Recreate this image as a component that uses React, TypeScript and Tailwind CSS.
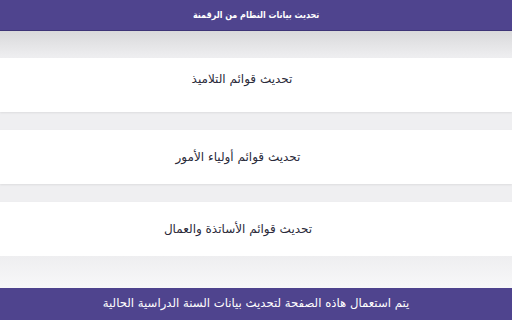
import React from "react";

const cards = [
  { t: "تحديث قوائم التلاميذ", c: "pb-[12px] pr-[28px]" },
  { t: "تحديث قوائم أولياء الأمور", c: "pr-[36px]" },
  { t: "تحديث قوائم الأساتذة والعمال", c: "pr-[36px]" },
];

export default function App() {
  return (
    <div
      dir="rtl"
      className="w-[512px] h-[320px] flex flex-col overflow-hidden bg-[#efeff1]"
      style={{ fontFamily: '"DejaVu Sans", "Noto Sans", sans-serif' }}
    >
      <div className="h-[31px] shrink-0 bg-[#4f448e] border-b border-[#3e3577] flex items-center justify-center">
        <span
          className="inline-block text-white text-[9.5px] font-bold scale-x-[0.84]"
          style={{ fontFamily: '"DejaVu Sans", sans-serif' }}
        >
          تحديث بيانات النظام من الرقمنة
        </span>
      </div>
      <div className="h-[27px] shrink-0 bg-gradient-to-b from-[#d9d9db] to-[#efeff1]" />
      <div className="flex flex-col gap-[18px] bg-[#efeff1]">
        {cards.map((c) => (
          <div
            key={c.t}
            className={`h-[54px] bg-white shadow-[0_1px_2px_rgba(0,0,0,0.08)] flex items-center justify-center ${c.c}`}
          >
            <span className="text-[12px] text-[#2a2a3a]">{c.t}</span>
          </div>
        ))}
      </div>
      <div className="flex-1 bg-gradient-to-b from-[#eeeef0] to-[#f8f8f9]" />
      <div className="h-[32px] shrink-0 bg-[#4f448e] flex items-center justify-center">
        <span className="text-white text-[11.7px]">
          يتم استعمال هاذه الصفحة لتحديث بيانات السنة الدراسية الحالية
        </span>
      </div>
    </div>
  );
}
